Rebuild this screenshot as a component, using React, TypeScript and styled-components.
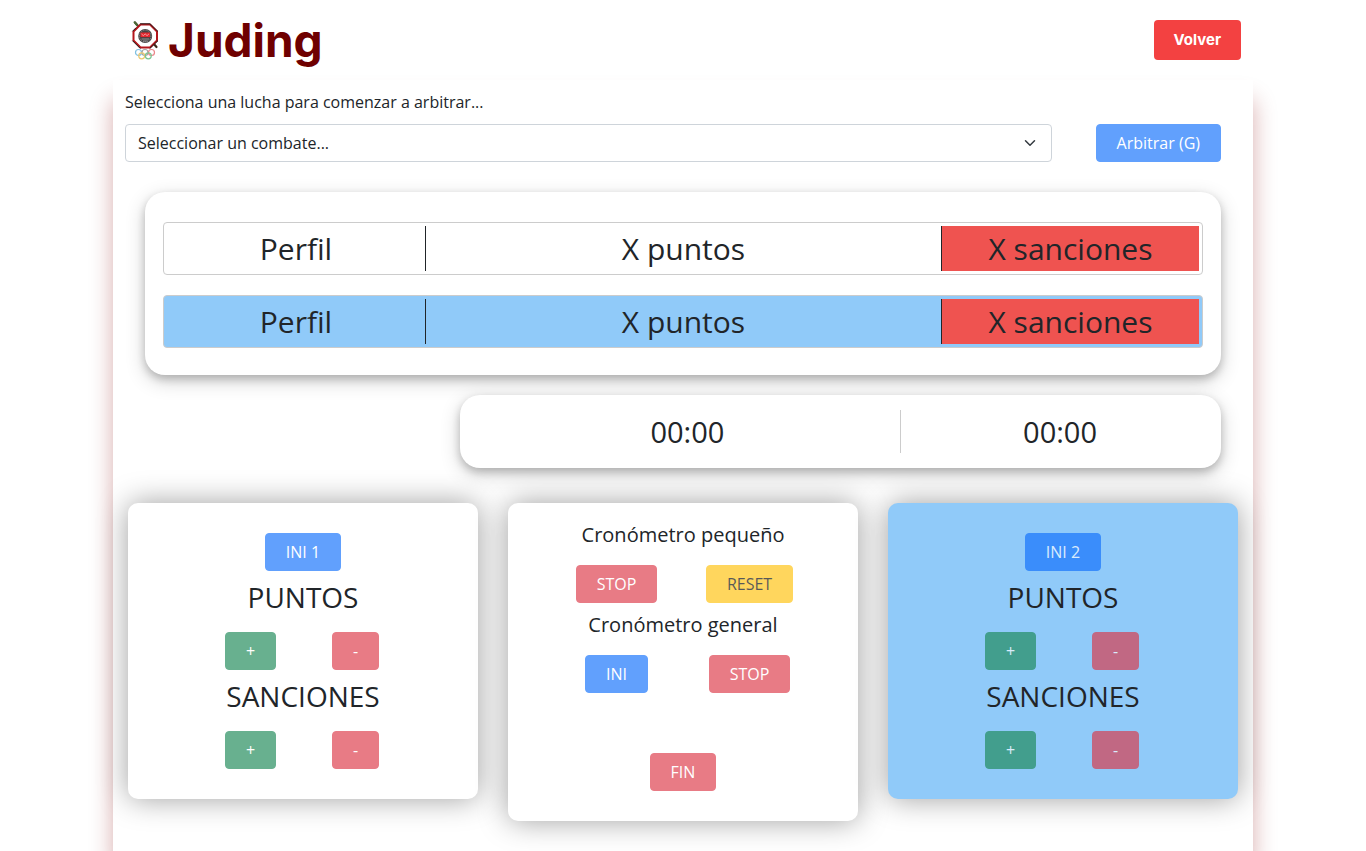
import React from 'react';
import styled, { createGlobalStyle } from 'styled-components';

const GlobalStyle = createGlobalStyle`
  *, *::before, *::after { box-sizing: border-box; }
  body {
    margin: 0;
    background: #fff;
    color: #212529;
    font: 400 16px/24px 'Open Sans', 'Noto Sans', sans-serif;
  }
`;

const tones = {
  primary: { background: '#0d6efd', color: '#fff' },
  success: { background: '#198754', color: '#fff' },
  danger: { background: '#dc3545', color: '#fff' },
  warning: { background: '#ffc107', color: '#000' },
};
type Tone = keyof typeof tones;

const Page = styled.div`
  max-width: 1140px;
  min-height: 100vh;
  margin: 0 auto;
  display: flex;
  flex-direction: column;
`;

const Header = styled.header`
  height: 80px;
  padding: 0 12px;
  display: flex;
  align-items: center;
  justify-content: space-between;
`;

const Brand = styled.a`
  display: flex;
  align-items: center;
  gap: 7px;
  padding-left: 4px;
  color: #6f0000;
  text-decoration: none;
`;

const BrandName = styled.span`
  font: 700 46px/60px Inter, 'Open Sans', sans-serif;
`;

const BackButton = styled.button`
  height: 40px;
  padding: 0 20px;
  border: 0;
  border-radius: 4px;
  background: #f34141;
  color: #fff;
  font: 700 15px/24px Inter, 'Open Sans', sans-serif;
`;

const Main = styled.main`
  flex: 1;
  padding: 10px 12px 30px;
  background: #fff;
  box-shadow: 0 20px 22px rgba(136, 0, 0, 0.32);
`;

const PickerLabel = styled.label`
  display: block;
  margin-bottom: 10px;
`;

const PickerRow = styled.div`
  display: flex;
  gap: 44px;
  margin-right: 20px;
`;

const SelectBox = styled.div`
  position: relative;
  flex: 1;
`;

const Select = styled.select`
  width: 100%;
  height: 38px;
  padding: 0 36px 0 12px;
  appearance: none;
  border: 1px solid #ced4da;
  border-radius: 4px;
  background: #fff;
  color: #212529;
  font: inherit;
`;

const Chevron = styled.svg`
  position: absolute;
  top: 13px;
  right: 16px;
  pointer-events: none;
`;

const ActionButton = styled.button<{ $tone: Tone }>`
  height: 38px;
  padding: 0 20px;
  border: 1px solid ${({ $tone }) => tones[$tone].background};
  border-radius: 4px;
  background: ${({ $tone }) => tones[$tone].background};
  color: ${({ $tone }) => tones[$tone].color};
  font: inherit;
  white-space: nowrap;
  &:disabled { opacity: 0.65; }
`;

const Panel = styled.section`
  border-radius: 20px;
  background: #fff;
  box-shadow: 0 4px 8px rgba(0, 0, 0, 0.2), 0 6px 20px rgba(0, 0, 0, 0.19);
`;

const ScorePanel = styled(Panel)`
  display: grid;
  gap: 20px;
  margin: 30px 20px 20px;
  padding: 30px 18px 27px;
`;

const ScoreTable = styled.table<{ $blue?: boolean }>`
  width: 100%;
  padding: 3px;
  table-layout: fixed;
  border: 1px solid #ccc;
  border-radius: 4px;
  border-collapse: separate;
  border-spacing: 0;
  background: ${({ $blue }) => ($blue ? '#90caf9' : '#fff')};
  font-size: 30px;
  line-height: 45px;
  text-align: center;
`;

const ScoreCell = styled.td<{ $width: string; $penalty?: boolean }>`
  width: ${({ $width }) => $width};
  padding: 0;
  background: ${({ $penalty }) => ($penalty ? '#ef5350' : 'transparent')};
  & + & { border-left: 1px solid #212529; }
`;

const ClockPanel = styled(Panel)`
  display: grid;
  grid-template-columns: 4fr 3fr;
  margin: 0 20px 35px 30%;
  padding: 15px 2px 15px 15px;
`;

const Clock = styled.div`
  font-size: 29px;
  line-height: 43px;
  text-align: center;
  & + & { border-left: 1px solid #ccc; }
`;

const Cards = styled.div`
  display: grid;
  grid-template-columns: repeat(3, 1fr);
  align-items: start;
  gap: 30px;
  margin: 0 3px;
`;

const Card = styled.section<{ $blue?: boolean; $top: number }>`
  display: flex;
  flex-direction: column;
  align-items: center;
  padding: ${({ $top }) => $top}px 30px 30px;
  border-radius: 10px;
  background: ${({ $blue }) => ($blue ? '#90caf9' : '#fff')};
  box-shadow: 0 0 30px rgba(0, 0, 0, 0.38);
`;

const CardTitle = styled.h3`
  margin: 9px 0 18px;
  font-size: 28px;
  font-weight: 400;
  line-height: 34px;
`;

const ClockTitle = styled.h5`
  margin: 10px 0 18px;
  font-size: 20px;
  font-weight: 400;
  line-height: 24px;
`;

const ButtonPair = styled.div<{ $width: number }>`
  display: grid;
  grid-template-columns: 1fr 1fr;
  justify-items: center;
  width: ${({ $width }) => $width}px;
  max-width: 100%;
`;

const FinishRow = styled.div`
  margin-top: 60px;
`;

const Logo = () => (
  <svg width="32" height="42" viewBox="0 0 32 42" aria-hidden="true">
    <path d="M6 3.5 27.5 28" stroke="#3d2b1c" strokeWidth="2.2" strokeLinecap="round" />
    <path d="M5.5 3.2l2.5 3" stroke="#4b6b35" strokeWidth="2" strokeLinecap="round" />
    <path
      d="M11.5 5.5h9.5l7 7v9l-7 7h-9.5l-7-7v-9z"
      fill="#fff"
      stroke="#b3161c"
      strokeWidth="2"
      strokeLinejoin="round"
    />
    <path
      d="M11.5 4.8h9.5l7.7 7.4M28.7 22 21 29.2M11 29.2 3.8 22M3.8 12l3-3"
      fill="none"
      stroke="#252020"
      strokeWidth="1"
      strokeLinecap="round"
    />
    <circle cx="16.2" cy="17" r="7" fill="#474344" />
    <circle cx="16.2" cy="17" r="5.8" fill="none" stroke="#a5a5a5" strokeWidth="0.8" strokeDasharray="1 1" />
    <path d="M11.5 13.5h9.5v4.6h-9.5z" fill="#e3262d" />
    <path d="m12.5 15 1.8 1.6 1.9-1.6 1.9 1.6 1.8-1.6" fill="none" stroke="#f6b8ba" strokeWidth="0.8" />
    <path d="M12.5 20h7.5M14 22h4.5" stroke="#aaa" strokeWidth="0.8" />
    <g fill="none" strokeWidth="1.2">
      <circle cx="9.5" cy="33.5" r="3" stroke="#7fc0e2" />
      <circle cx="16" cy="33.5" r="3" stroke="#a5a5a5" />
      <circle cx="22.5" cy="33.5" r="3" stroke="#ea8589" />
      <circle cx="12.7" cy="36.8" r="3" stroke="#ecc971" />
      <circle cx="19.3" cy="36.8" r="3" stroke="#7cc493" />
    </g>
  </svg>
);

const ScoreRow = ({ blue, label }: { blue?: boolean; label: string }) => (
  <ScoreTable $blue={blue} aria-label={label}>
    <tbody>
      <tr>
        <ScoreCell $width="25%">Perfil</ScoreCell>
        <ScoreCell $width="50%">X puntos</ScoreCell>
        <ScoreCell $width="25%" $penalty>X sanciones</ScoreCell>
      </tr>
    </tbody>
  </ScoreTable>
);

const Counter = ({ title }: { title: string }) => (
  <>
    <CardTitle>{title}</CardTitle>
    <ButtonPair $width={210}>
      <ActionButton $tone="success" disabled>+</ActionButton>
      <ActionButton $tone="danger" disabled>-</ActionButton>
    </ButtonPair>
  </>
);

const FighterCard = ({ start, blue }: { start: string; blue?: boolean }) => (
  <Card $blue={blue} $top={30}>
    <ActionButton $tone="primary" disabled>{start}</ActionButton>
    <Counter title="PUNTOS" />
    <Counter title="SANCIONES" />
  </Card>
);

export default function App() {
  return (
    <>
      <GlobalStyle />
      <Page>
        <Header>
          <Brand href="#">
            <Logo />
            <BrandName>Juding</BrandName>
          </Brand>
          <BackButton type="button">Volver</BackButton>
        </Header>
        <Main>
          <PickerLabel htmlFor="combate">Selecciona una lucha para comenzar a arbitrar...</PickerLabel>
          <PickerRow>
            <SelectBox>
              <Select id="combate">
                <option>Seleccionar un combate...</option>
              </Select>
              <Chevron width="12" height="12" viewBox="0 0 16 16" aria-hidden="true">
                <path d="m2 5 6 6 6-6" fill="none" stroke="#343a40" strokeWidth="2" strokeLinecap="round" strokeLinejoin="round" />
              </Chevron>
            </SelectBox>
            <ActionButton $tone="primary" disabled>Arbitrar (G)</ActionButton>
          </PickerRow>
          <ScorePanel>
            <ScoreRow label="Luchador 1" />
            <ScoreRow label="Luchador 2" blue />
          </ScorePanel>
          <ClockPanel>
            <Clock>00:00</Clock>
            <Clock>00:00</Clock>
          </ClockPanel>
          <Cards>
            <FighterCard start="INI 1" />
            <Card $top={10}>
              <ClockTitle>Cronómetro pequeño</ClockTitle>
              <ButtonPair $width={266}>
                <ActionButton $tone="danger" disabled>STOP</ActionButton>
                <ActionButton $tone="warning" disabled>RESET</ActionButton>
              </ButtonPair>
              <ClockTitle>Cronómetro general</ClockTitle>
              <ButtonPair $width={266}>
                <ActionButton $tone="primary" disabled>INI</ActionButton>
                <ActionButton $tone="danger" disabled>STOP</ActionButton>
              </ButtonPair>
              <FinishRow>
                <ActionButton $tone="danger" disabled>FIN</ActionButton>
              </FinishRow>
            </Card>
            <FighterCard start="INI 2" blue />
          </Cards>
        </Main>
      </Page>
    </>
  );
}
